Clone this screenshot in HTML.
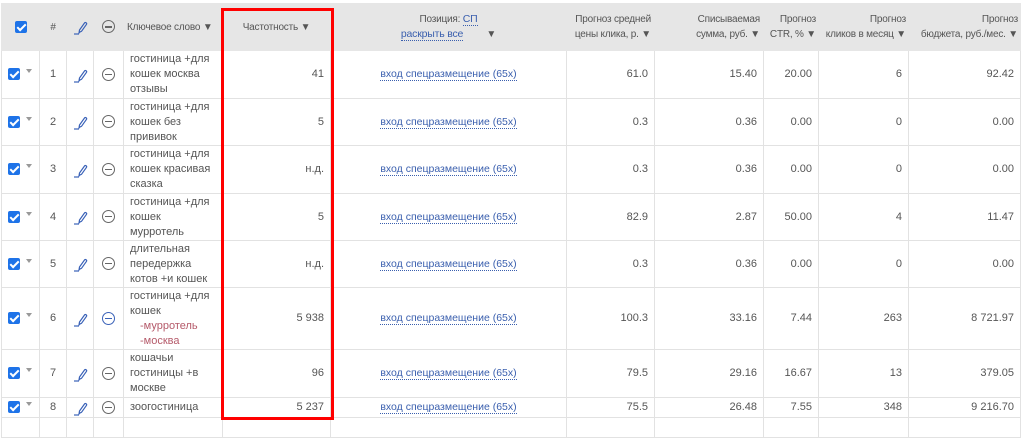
<!DOCTYPE html>
<html><head><meta charset="utf-8"><style>
body{margin:0;width:1024px;height:422px;overflow:hidden;background:#fff;font-family:"Liberation Sans","DejaVu Sans",sans-serif;font-size:11px;color:#555;position:relative}
table{position:absolute;left:1px;top:3px;border-collapse:collapse;table-layout:fixed;width:1019px}
td,th{border:1px solid #e2e2e2;padding:0 6px;overflow:hidden}
th{background:#e6e6e6;font-weight:normal;color:#555;height:46px;line-height:15px;border-color:#e6e6e6;font-size:10px;letter-spacing:-0.2px}
td{line-height:15px;height:46px}
tr.m td{height:47px}
tr.s td{height:19px;line-height:15px}
tr.t td{height:61px}
.r{text-align:right}.c{text-align:center}
.cb{display:inline-block;width:12px;height:12px;background:#1e73e8;border-radius:2px;position:relative;vertical-align:middle}
.cb:after{content:"";position:absolute;left:4px;top:1px;width:3px;height:7px;border:solid #fff;border-width:0 2px 2px 0;transform:rotate(45deg)}
.ar{display:inline-block;width:0;height:0;border-left:3px solid transparent;border-right:3px solid transparent;border-top:4px solid #999;margin-left:6px;vertical-align:middle;margin-top:-6px}
.mn{display:inline-block;width:11px;height:11px;border:1.3px solid #666;border-radius:50%;position:relative;vertical-align:middle}
.mn:after{content:"";position:absolute;left:2px;right:2px;top:5px;height:1.3px;background:#666}
.mn.b{border-color:#3a62b8}.mn.b:after{background:#3a62b8}
a{color:#3a5fae;text-decoration:none;border-bottom:1px dotted #3a5fae;font-size:10.5px}
.neg{color:#b55a6a;padding-left:10px}
#red{position:absolute;left:221px;top:8px;width:107px;height:406px;border:3px solid #f00}
</style></head><body>
<table>
<colgroup><col style="width:38px"><col style="width:27px"><col style="width:27px"><col style="width:30px"><col style="width:99px"><col style="width:108px"><col style="width:236px"><col style="width:88px"><col style="width:109px"><col style="width:55px"><col style="width:90px"><col style="width:112px"></colgroup>
<tr><th><span class="cb"></span></th><th>#</th><th>PEN</th><th><span class="mn"></span></th><th style="text-align:left;white-space:nowrap;padding:0 3px">Ключевое слово ▼</th><th>Частотность ▼</th><th>Позиция: <a>СП</a><br><a>раскрыть все</a> &nbsp; &nbsp; &nbsp; &nbsp; ▼</th><th class="r" style="white-space:nowrap;padding:0 3px">Прогноз средней<br>цены клика, р. ▼</th><th class="r" style="padding:0 3px">Списываемая<br>сумма, руб. ▼</th><th class="r" style="white-space:nowrap;padding:0 2px">Прогноз<br>CTR, % ▼</th><th class="r" style="white-space:nowrap;padding:0 2px">Прогноз<br>кликов в месяц ▼</th><th class="r" style="white-space:nowrap;padding:0 2px">Прогноз<br>бюджета, руб./мес. ▼</th></tr>
<tr class="m"><td><span class="cb"></span><span class="ar"></span></td><td class="c">1</td><td class="c">PEN</td><td class="c"><span class="mn"></span></td><td>гостиница +для кошек москва отзывы</td><td class="r">41</td><td class="c"><a>вход спецразмещение (65x)</a></td><td class="r">61.0</td><td class="r">15.40</td><td class="r">20.00</td><td class="r">6</td><td class="r">92.42</td></tr>
<tr><td><span class="cb"></span><span class="ar"></span></td><td class="c">2</td><td class="c">PEN</td><td class="c"><span class="mn"></span></td><td>гостиница +для кошек без прививок</td><td class="r">5</td><td class="c"><a>вход спецразмещение (65x)</a></td><td class="r">0.3</td><td class="r">0.36</td><td class="r">0.00</td><td class="r">0</td><td class="r">0.00</td></tr>
<tr class="m"><td><span class="cb"></span><span class="ar"></span></td><td class="c">3</td><td class="c">PEN</td><td class="c"><span class="mn"></span></td><td>гостиница +для кошек красивая сказка</td><td class="r">н.д.</td><td class="c"><a>вход спецразмещение (65x)</a></td><td class="r">0.3</td><td class="r">0.36</td><td class="r">0.00</td><td class="r">0</td><td class="r">0.00</td></tr>
<tr><td><span class="cb"></span><span class="ar"></span></td><td class="c">4</td><td class="c">PEN</td><td class="c"><span class="mn"></span></td><td>гостиница +для кошек мурротель</td><td class="r">5</td><td class="c"><a>вход спецразмещение (65x)</a></td><td class="r">82.9</td><td class="r">2.87</td><td class="r">50.00</td><td class="r">4</td><td class="r">11.47</td></tr>
<tr><td><span class="cb"></span><span class="ar"></span></td><td class="c">5</td><td class="c">PEN</td><td class="c"><span class="mn"></span></td><td>длительная передержка котов +и кошек</td><td class="r">н.д.</td><td class="c"><a>вход спецразмещение (65x)</a></td><td class="r">0.3</td><td class="r">0.36</td><td class="r">0.00</td><td class="r">0</td><td class="r">0.00</td></tr>
<tr class="t"><td><span class="cb"></span><span class="ar"></span></td><td class="c">6</td><td class="c">PEN</td><td class="c"><span class="mn b"></span></td><td>гостиница +для кошек<br><span class="neg">-мурротель</span><br><span class="neg">-москва</span></td><td class="r">5 938</td><td class="c"><a>вход спецразмещение (65x)</a></td><td class="r">100.3</td><td class="r">33.16</td><td class="r">7.44</td><td class="r">263</td><td class="r">8 721.97</td></tr>
<tr class="m"><td><span class="cb"></span><span class="ar"></span></td><td class="c">7</td><td class="c">PEN</td><td class="c"><span class="mn"></span></td><td>кошачьи гостиницы +в москве</td><td class="r">96</td><td class="c"><a>вход спецразмещение (65x)</a></td><td class="r">79.5</td><td class="r">29.16</td><td class="r">16.67</td><td class="r">13</td><td class="r">379.05</td></tr>
<tr class="s"><td><span class="cb"></span><span class="ar"></span></td><td class="c">8</td><td class="c">PEN</td><td class="c"><span class="mn"></span></td><td>зоогостиница</td><td class="r">5 237</td><td class="c"><a>вход спецразмещение (65x)</a></td><td class="r">75.5</td><td class="r">26.48</td><td class="r">7.55</td><td class="r">348</td><td class="r">9 216.70</td></tr>
<tr class="s"><td></td><td></td><td></td><td></td><td></td><td></td><td></td><td></td><td></td><td></td><td></td><td></td></tr>
</table>
<div id="red"></div>
<script>
document.querySelectorAll('td,th').forEach(function(t){if(t.textContent==='PEN'){t.innerHTML='<svg width="16" height="16" viewBox="0 0 16 16" style="vertical-align:middle"><path d="M1 15h5" stroke="#3a62b8" stroke-width="1.2"/><path d="M7 13l-1 1 0.5-3 5-7a1.2 1.2 0 0 1 2 1.3l-5 7z" fill="none" stroke="#3a62b8" stroke-width="1.2"/></svg>';}});
</script>
</body></html>
